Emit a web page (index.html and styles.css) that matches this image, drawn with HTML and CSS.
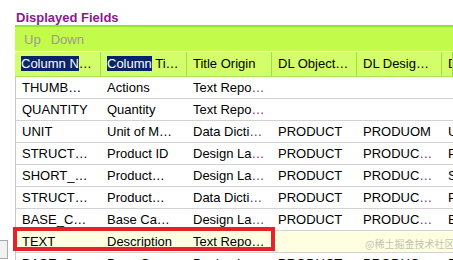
FILE: index.html
```html
<!DOCTYPE html>
<html>
<head>
    <title>Displayed Fields</title>
    <link rel="stylesheet" href="styles.css">
</head>
<body>
    <div class="side-button"></div>

    <div class="panel">
        <h2 class="title">Displayed Fields</h2>

        <div class="toolbar">
            <span class="tool">Up</span>
            <span class="tool">Down</span>
        </div>

        <div class="grid">
            <div class="head">
                <div class="cell"><span class="sel">Column N</span>…</div>
                <div class="cell"><span class="sel">Column</span> Ti…</div>
                <div class="cell">Title Origin</div>
                <div class="cell">DL Object…</div>
                <div class="cell">DL Desig…</div>
                <div class="cell">D</div>
            </div>

            <div class="row">
                <div class="cell">THUMB…</div>
                <div class="cell">Actions</div>
                <div class="cell">Text Repo<span class="dots">…</span></div>
                <div class="cell"></div>
                <div class="cell"></div>
                <div class="cell"></div>
            </div>
            <div class="row">
                <div class="cell">QUANTITY</div>
                <div class="cell">Quantity</div>
                <div class="cell">Text Repo<span class="dots">…</span></div>
                <div class="cell"></div>
                <div class="cell"></div>
                <div class="cell"></div>
            </div>
            <div class="row">
                <div class="cell">UNIT</div>
                <div class="cell">Unit of M…</div>
                <div class="cell">Data Dicti<span class="dots">…</span></div>
                <div class="cell">PRODUCT</div>
                <div class="cell">PRODUOM</div>
                <div class="cell">U</div>
            </div>
            <div class="row">
                <div class="cell">STRUCT…</div>
                <div class="cell">Product ID</div>
                <div class="cell">Design La<span class="dots">…</span></div>
                <div class="cell">PRODUCT</div>
                <div class="cell">PRODUC<span class="dots">…</span></div>
                <div class="cell">P</div>
            </div>
            <div class="row">
                <div class="cell">SHORT_…</div>
                <div class="cell">Product…</div>
                <div class="cell">Design La<span class="dots">…</span></div>
                <div class="cell">PRODUCT</div>
                <div class="cell">PRODUC<span class="dots">…</span></div>
                <div class="cell">S</div>
            </div>
            <div class="row">
                <div class="cell">STRUCT…</div>
                <div class="cell">Product…</div>
                <div class="cell">Data Dicti<span class="dots">…</span></div>
                <div class="cell">PRODUCT</div>
                <div class="cell">PRODUC<span class="dots">…</span></div>
                <div class="cell">P</div>
            </div>
            <div class="row">
                <div class="cell">BASE_C…</div>
                <div class="cell">Base Ca…</div>
                <div class="cell">Design La<span class="dots">…</span></div>
                <div class="cell">PRODUCT</div>
                <div class="cell">PRODUC<span class="dots">…</span></div>
                <div class="cell">B</div>
            </div>
            <div class="row current">
                <div class="cell">TEXT</div>
                <div class="cell">Description</div>
                <div class="cell">Text Repo…</div>
                <div class="cell"></div>
                <div class="cell"></div>
                <div class="cell"></div>
                <div class="mark"></div>
            </div>
            <div class="row">
                <div class="cell">BASE_C…</div>
                <div class="cell">Base Ca…</div>
                <div class="cell">Design La<span class="dots">…</span></div>
                <div class="cell">PRODUCT</div>
                <div class="cell">PRODUC<span class="dots">…</span></div>
                <div class="cell">B</div>
            </div>
        </div>
    </div>

    <div class="watermark">@稀土掘金技术社区</div>
</body>
</html>
```

FILE: styles.css
```css
body {
    margin: 0;
    padding: 0;
    width: 453px;
    height: 260px;
    overflow: hidden;
    position: relative;
    background-color: #fff;
    font-family: "Liberation Sans", Arial, sans-serif;
    font-size: 13px;
    color: #000;
}

.panel {
    padding: 10px 0 0 15px;
}

.title {
    margin: 0 0 0 1px;
    height: 15px;
    line-height: 15px;
    font-size: 13px;
    font-weight: bold;
    color: #8a1a8c;
}

.toolbar {
    height: 24px;
    background-color: #c3fb4b;
    border-top: 2px solid #8fe62c;
    display: flex;
    align-items: center;
    gap: 10px;
    padding-left: 9px;
}

.tool {
    color: #9a9a9a;
}

.grid {
    border-left: 1px solid #c8c8c8;
}

.head,
.row {
    display: grid;
    grid-template-columns: 85px 86px 85px 85px 85px 1fr;
}

.head {
    height: 24px;
    background-color: #d3fd69;
    border-top: 1px solid #fff;
    border-bottom: 1px solid #a8e64c;
    margin-left: -1px;
    grid-template-columns: 86px 86px 85px 85px 85px 1fr;
}

.head .cell {
    border-right: 1px solid #a0e040;
    line-height: 24px;
}

.row {
    height: 21px;
    border-bottom: 1px solid #d2d2d2;
    position: relative;
}

.cell {
    padding-left: 6px;
    white-space: nowrap;
    overflow: hidden;
    line-height: 21px;
}

.sel {
    background-color: #0a246a;
    color: #fff;
}

.dots {
    color: #8a1a8c;
}

.current {
    background-color: #fefee0;
}

.mark {
    position: absolute;
    left: -3px;
    top: -4px;
    width: 254px;
    height: 16px;
    border: 4px solid #e5212b;
}

.side-button {
    position: absolute;
    left: -2px;
    top: 240px;
    width: 8px;
    height: 17px;
    background-color: #f2f2f2;
    border: 1px solid #aaa;
}

.watermark {
    position: absolute;
    left: 365px;
    top: 236px;
    white-space: nowrap;
    font-family: "Noto Sans CJK SC", sans-serif;
    font-size: 10px;
    color: rgba(150, 150, 150, 0.6);
}
```
